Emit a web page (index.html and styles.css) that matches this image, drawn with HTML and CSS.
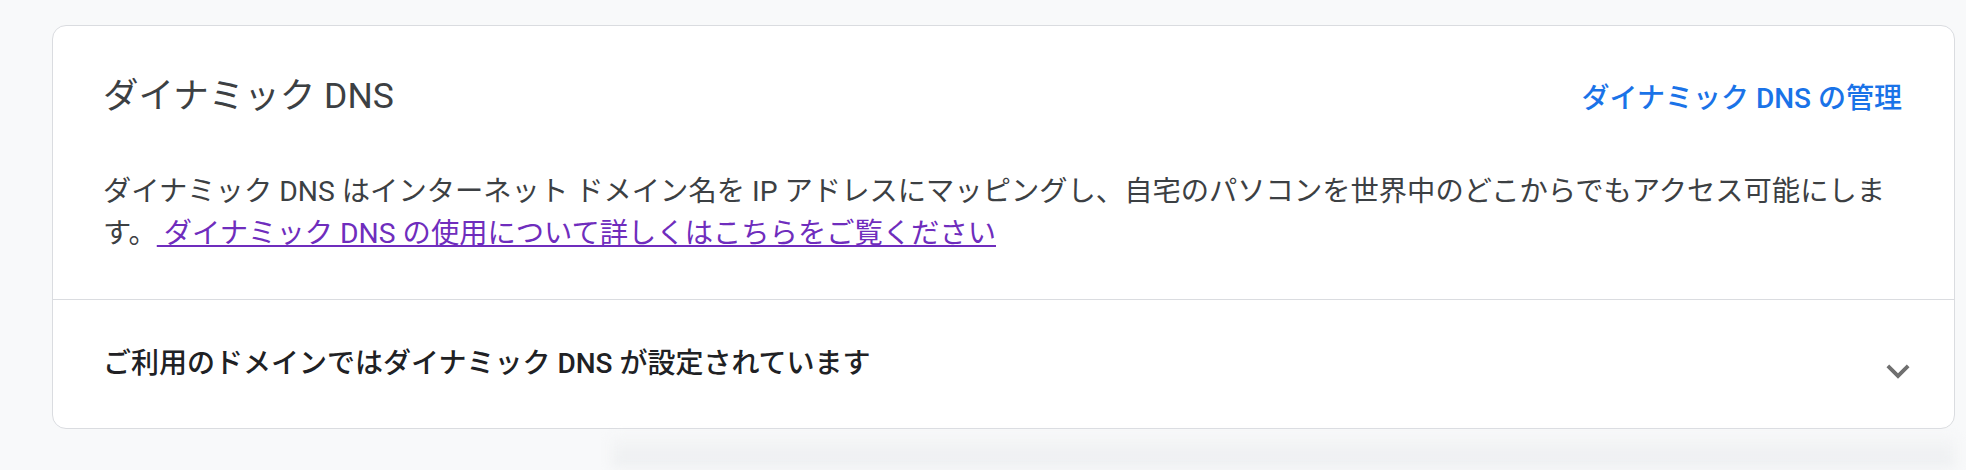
FILE: index.html
```html
<!DOCTYPE html>
<html lang="ja">
<head>
<meta charset="utf-8">
<title>ダイナミック DNS</title>
<link rel="stylesheet" href="styles.css">
</head>
<body>
<main class="page">
  <section class="card">
    <div class="card-top">
      <div class="card-header">
        <h2 class="card-title">ダイナミック DNS</h2>
        <a class="manage-link" href="#">ダイナミック DNS の管理</a>
      </div>
      <p class="card-desc">ダイナミック DNS はインターネット ドメイン名を IP アドレスにマッピングし、自宅のパソコンを世界中のどこからでもアクセス可能にします。<a class="learn-link" href="#"> ダイナミック DNS の使用について詳しくはこちらをご覧ください</a></p>
    </div>
    <div class="card-row">
      <span class="row-label">ご利用のドメインではダイナミック DNS が設定されています</span>
      <svg class="row-chevron" viewBox="0 0 24 24" width="46" height="46" aria-hidden="true"><path d="M16.59 8.59L12 13.17 7.41 8.59 6 10l6 6 6-6z" fill="#707070"/></svg>
    </div>
  </section>
  <div class="backdrop"></div>
</main>
</body>
</html>
```

FILE: styles.css
```css
html, body {
  margin: 0;
  padding: 0;
}
body {
  background: #f8f9fa;
  font-family: Roboto, "Noto Sans CJK JP", sans-serif;
  color: #3c4043;
  height: 470px;
  overflow: hidden;
}
.page {
  padding: 25px 11px 0 52px;
}
.card {
  background: #fff;
  border: 1px solid #dadce0;
  border-radius: 14px;
  overflow: hidden;
}
.card-top {
  padding: 46px 52px 44px 50px;
}
.card-header {
  display: flex;
  justify-content: space-between;
  align-items: baseline;
}
.card-title {
  margin: 0;
  font-size: 35.5px;
  line-height: 48px;
  font-weight: 400;
  color: #3c4043;
}
.manage-link {
  font-size: 28px;
  line-height: 48px;
  font-weight: 500;
  color: #1a73e8;
  text-decoration: none;
}
.card-desc {
  margin: 48px 0 0;
  font-size: 28.3px;
  line-height: 42px;
  color: #3c4043;
}
.learn-link {
  color: #6f2dbd;
  text-decoration: underline;
  text-underline-offset: 2px;
}
.card-row {
  border-top: 1px solid #dadce0;
  height: 128px;
  display: flex;
  align-items: center;
  justify-content: space-between;
  padding: 0 33px 0 50px;
}
.row-label {
  font-size: 28px;
  line-height: 42px;
  font-weight: 500;
  color: #202124;
}
.row-chevron {
  margin-top: 14px;
  flex: none;
}
.backdrop {
  margin: 8px 0 0 560px;
  height: 30px;
  background: linear-gradient(to bottom, #f4f5f6, #eceef0);
  filter: blur(6px);
}
```
